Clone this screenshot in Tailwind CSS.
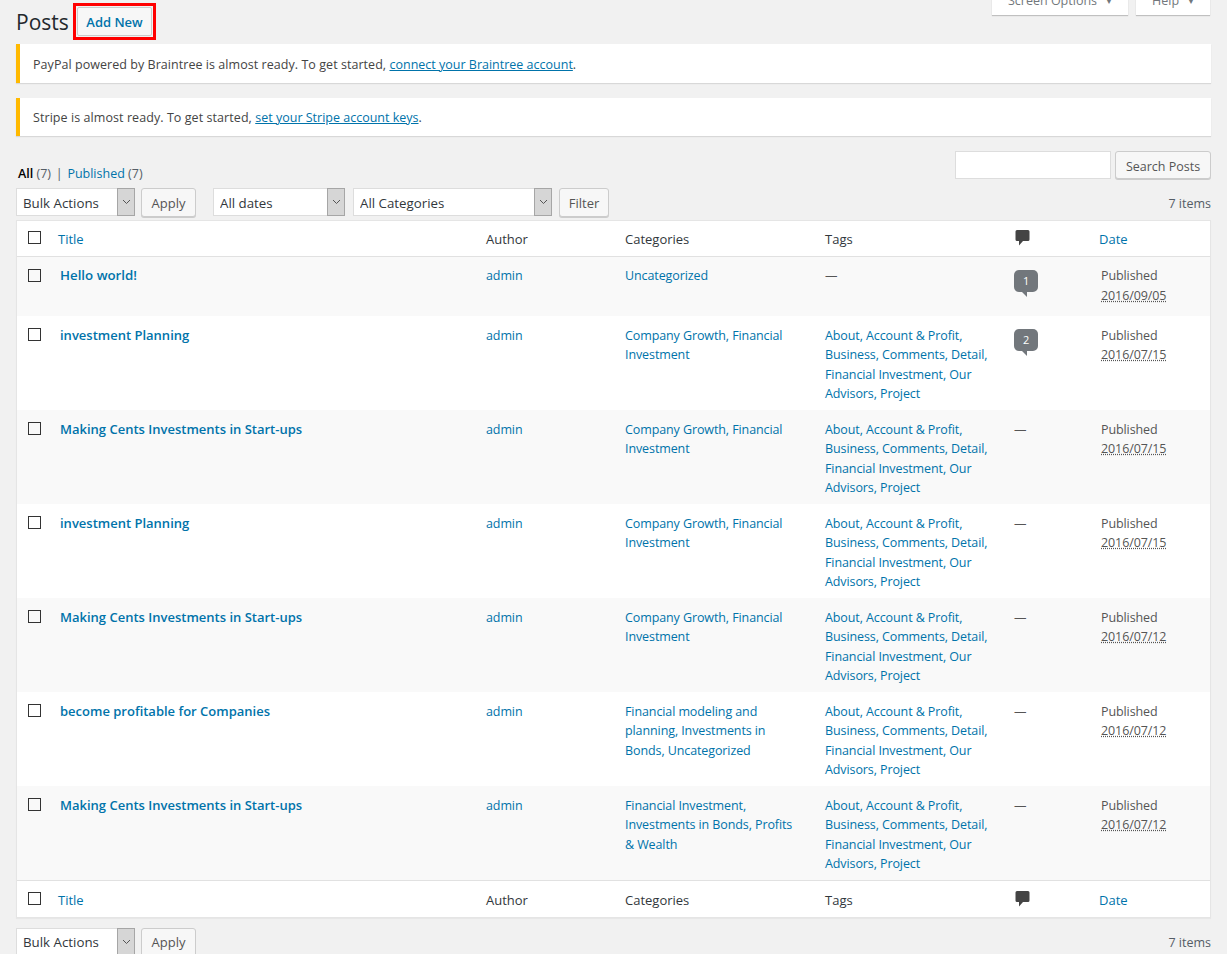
<!DOCTYPE html>
<html lang="en">
<head>
    <meta charset="UTF-8">
    <meta name="viewport" content="width=device-width, initial-scale=1.0">
    <title>Posts</title>
    <script src="https://cdn.jsdelivr.net/npm/@tailwindcss/browser@4"></script>
</head>
<body class="bg-[#f1f1f1] font-['Open_Sans',sans-serif] text-[12.5px] leading-[19.5px] text-[#444]">
<div class="h-[954px] overflow-hidden pl-[16px] pr-[16px]">

    <!-- Heading + screen meta tabs -->
    <div class="flex justify-between items-start h-[44px]">
        <div class="flex items-start">
            <h1 class="w-[52px] text-[21px] leading-[29px] text-[#23282d] mt-[8px]">Posts</h1>
            <div class="ml-[5px] mt-[3px] border-[3px] border-[#ff0000] p-[1px]">
                <a href="#" class="block w-[75px] h-[29px] leading-[28px] text-[13px] text-center border border-[#ccc] bg-[#f7f7f7] rounded-[2px] text-[#0073aa] font-semibold">Add New</a>
            </div>
        </div>
        <div class="flex gap-[8px] -mt-[13px] mr-[1px] items-start">
            <button class="w-[136px] h-[28px] bg-white shadow-[0_1px_1px_rgba(0,0,0,0.2)] text-[#72777c] flex items-center pl-[16px] gap-[8px]">Screen Options <span class="text-[8px]">▼</span></button>
            <button class="w-[74px] h-[28px] bg-white shadow-[0_1px_1px_rgba(0,0,0,0.2)] text-[#72777c] flex items-center pl-[16px] gap-[8px]">Help <span class="text-[8px]">▼</span></button>
        </div>
    </div>

    <!-- Notices -->
    <div class="h-[39px] bg-white border-l-[4px] border-[#ffb900] shadow-[0_1px_1px_rgba(0,0,0,0.1)] pl-[13px] pt-[11px] text-[#444] tracking-[0.05px]">
        PayPal powered by Braintree is almost ready. To get started, <a href="#" class="text-[#0073aa] underline tracking-normal">connect your Braintree account</a>.
    </div>
    <div class="h-[38px] mt-[15px] bg-white border-l-[4px] border-[#ffb900] shadow-[0_1px_1px_rgba(0,0,0,0.1)] pl-[13px] pt-[10px] text-[#444] tracking-[0.07px]">
        Stripe is almost ready. To get started, <a href="#" class="text-[#0073aa] underline tracking-normal">set your Stripe account keys</a>.
    </div>

    <!-- Views + search -->
    <div class="flex justify-between mt-[15px] h-[37px]">
        <div class="pl-[2px] pt-[13px] text-[#555d66]"><span class="font-semibold text-black">All</span> (7) <span class="mx-[1.500px]">|</span> <a href="#" class="text-[#0073aa]">Published</a> (7)</div>
        <div class="flex gap-[4px]">
            <input type="text" class="w-[156px] h-[28px] bg-white border border-[#ddd]">
            <button class="w-[96px] h-[28px] pt-[4px] bg-[#f7f7f7] border border-[#ccc] rounded-[3px] shadow-[0_1px_0_#ccc] text-[#555]">Search Posts</button>
        </div>
    </div>

    <!-- Top filters -->
    <div class="flex items-start h-[32px]">
        <div class="relative w-[119px] h-[28px]">
            <select class="appearance-none w-full h-full bg-white border border-[#ddd] pl-[6px] pt-[4px] text-[13.3px] text-[#32373c]"><option>Bulk Actions</option></select>
            <span class="absolute right-0 top-0 w-[18px] h-[28px] bg-[#d6d6d6] border border-[#a6a6a6] flex items-center justify-center"><svg width="9" height="6" viewBox="0 0 9 6" fill="none" stroke="#555" stroke-width="1"><path d="M1 1l3.5 3.5L8 1"/></svg></span>
        </div>
        <button class="ml-[6px] w-[55px] h-[29px] pt-[3px] text-[13px] bg-[#f7f7f7] border border-[#ccc] rounded-[3px] shadow-[0_1px_0_#ccc] text-[#555]">Apply</button>
        <div class="relative ml-[17px] w-[132px] h-[28px]">
            <select class="appearance-none w-full h-full bg-white border border-[#ddd] pl-[6px] pt-[4px] text-[13.3px] text-[#32373c]"><option>All dates</option></select>
            <span class="absolute right-0 top-0 w-[18px] h-[28px] bg-[#d6d6d6] border border-[#a6a6a6] flex items-center justify-center"><svg width="9" height="6" viewBox="0 0 9 6" fill="none" stroke="#555" stroke-width="1"><path d="M1 1l3.5 3.5L8 1"/></svg></span>
        </div>
        <div class="relative ml-[8px] w-[199px] h-[28px]">
            <select class="appearance-none w-full h-full bg-white border border-[#ddd] pl-[6px] pt-[4px] text-[13.3px] text-[#32373c]"><option>All Categories</option></select>
            <span class="absolute right-0 top-0 w-[18px] h-[28px] bg-[#d6d6d6] border border-[#a6a6a6] flex items-center justify-center"><svg width="9" height="6" viewBox="0 0 9 6" fill="none" stroke="#555" stroke-width="1"><path d="M1 1l3.5 3.5L8 1"/></svg></span>
        </div>
        <button class="ml-[7px] w-[50px] h-[29px] pt-[3px] text-[13px] bg-[#f7f7f7] border border-[#ccc] rounded-[3px] shadow-[0_1px_0_#ccc] text-[#555]">Filter</button>
        <div class="ml-auto pt-[6px] text-[#555d66]">7 items</div>
    </div>

    <!-- Posts table -->
    <div class="bg-white border border-[#e5e5e5] shadow-[0_1px_1px_rgba(0,0,0,0.04)] text-[#555] tracking-[-0.1px]">
        <div class="grid grid-cols-[43px_426px_139px_200px_189px_85px_1fr] h-[36px] border-b border-[#e1e1e1] pt-[9px] text-[13px] tracking-normal text-[#32373c]">
            <div><input type="checkbox" class="block appearance-none w-[13px] h-[13px] border border-[#333] ml-[11px] mt-[1px]"></div>
            <div><a href="#" class="-ml-[2px] text-[#0073aa]">Title</a></div>
            <div>Author</div>
            <div>Categories</div>
            <div>Tags</div>
            <div><svg class="ml-[1px]" width="15" height="16" viewBox="0 0 15 16" fill="#444"><path d="M2 0h11a1.5 1.5 0 0 1 1.5 1.500v8A1.500 1.500 0 0 1 13 11H8l-4 4.500V11H2A1.500 1.500 0 0 1 .5 9.500v-8A1.500 1.500 0 0 1 2 0z"/></svg></div>
            <div class="pl-[2px]"><a href="#" class="-ml-[2px] text-[#0073aa]">Date</a></div>
        </div>

        <div class="grid grid-cols-[43px_426px_139px_200px_189px_87px_1fr] h-[59px] bg-[#f9f9f9] pt-[9px]">
            <div><input type="checkbox" class="block appearance-none w-[13px] h-[13px] border border-[#333] ml-[11px] mt-[3px]"></div>
            <div><a href="#" class="text-[13.3px] tracking-normal font-semibold text-[#0073aa]">Hello world!</a></div>
            <div><a href="#" class="text-[#0073aa]">admin</a></div>
            <div class="w-[172px]"><a href="#" class="text-[#0073aa]">Uncategorized</a></div>
            <div>—</div>
            <div class="relative">
                <span class="relative block w-[24px] h-[22px] mt-[4px] bg-[#72777c] rounded-[5px] text-white text-[11px] leading-[22px] text-center">1<span class="absolute left-[8px] top-[22px] border-l-[5px] border-t-[5px] border-l-transparent border-t-[#72777c]"></span></span>
            </div>
            <div>Published<br><abbr class="underline decoration-dotted">2016/09/05</abbr></div>
        </div>

        <div class="grid grid-cols-[43px_426px_139px_200px_189px_87px_1fr] h-[94px] pt-[9.5px]">
            <div><input type="checkbox" class="block appearance-none w-[13px] h-[13px] border border-[#333] ml-[11px] mt-[2.5px]"></div>
            <div><a href="#" class="text-[13px] tracking-normal font-semibold text-[#0073aa]">investment Planning</a></div>
            <div><a href="#" class="text-[#0073aa]">admin</a></div>
            <div class="w-[172px] text-[#0073aa]"><a href="#">Company Growth</a>, <a href="#">Financial Investment</a></div>
            <div class="w-[172px] text-[#0073aa]"><a href="#">About</a>, <a href="#">Account &amp; Profit</a>, <a href="#">Business</a>, <a href="#">Comments</a>, <a href="#">Detail</a>, <a href="#">Financial Investment</a>, <a href="#">Our Advisors</a>, <a href="#">Project</a></div>
            <div class="relative">
                <span class="relative block w-[24px] h-[22px] mt-[3.5px] bg-[#72777c] rounded-[5px] text-white text-[11px] leading-[22px] text-center">2<span class="absolute left-[8px] top-[22px] border-l-[5px] border-t-[5px] border-l-transparent border-t-[#72777c]"></span></span>
            </div>
            <div>Published<br><abbr class="underline decoration-dotted">2016/07/15</abbr></div>
        </div>

        <div class="grid grid-cols-[43px_426px_139px_200px_189px_87px_1fr] h-[94px] bg-[#f9f9f9] pt-[9.5px]">
            <div><input type="checkbox" class="block appearance-none w-[13px] h-[13px] border border-[#333] ml-[11px] mt-[2.5px]"></div>
            <div><a href="#" class="text-[13px] tracking-normal font-semibold text-[#0073aa]">Making Cents Investments in Start-ups</a></div>
            <div><a href="#" class="text-[#0073aa]">admin</a></div>
            <div class="w-[172px] text-[#0073aa]"><a href="#">Company Growth</a>, <a href="#">Financial Investment</a></div>
            <div class="w-[172px] text-[#0073aa]"><a href="#">About</a>, <a href="#">Account &amp; Profit</a>, <a href="#">Business</a>, <a href="#">Comments</a>, <a href="#">Detail</a>, <a href="#">Financial Investment</a>, <a href="#">Our Advisors</a>, <a href="#">Project</a></div>
            <div>—</div>
            <div>Published<br><abbr class="underline decoration-dotted">2016/07/15</abbr></div>
        </div>

        <div class="grid grid-cols-[43px_426px_139px_200px_189px_87px_1fr] h-[94px] pt-[9.5px]">
            <div><input type="checkbox" class="block appearance-none w-[13px] h-[13px] border border-[#333] ml-[11px] mt-[2.5px]"></div>
            <div><a href="#" class="text-[13px] tracking-normal font-semibold text-[#0073aa]">investment Planning</a></div>
            <div><a href="#" class="text-[#0073aa]">admin</a></div>
            <div class="w-[172px] text-[#0073aa]"><a href="#">Company Growth</a>, <a href="#">Financial Investment</a></div>
            <div class="w-[172px] text-[#0073aa]"><a href="#">About</a>, <a href="#">Account &amp; Profit</a>, <a href="#">Business</a>, <a href="#">Comments</a>, <a href="#">Detail</a>, <a href="#">Financial Investment</a>, <a href="#">Our Advisors</a>, <a href="#">Project</a></div>
            <div>—</div>
            <div>Published<br><abbr class="underline decoration-dotted">2016/07/15</abbr></div>
        </div>

        <div class="grid grid-cols-[43px_426px_139px_200px_189px_87px_1fr] h-[94px] bg-[#f9f9f9] pt-[9.5px]">
            <div><input type="checkbox" class="block appearance-none w-[13px] h-[13px] border border-[#333] ml-[11px] mt-[2.5px]"></div>
            <div><a href="#" class="text-[13px] tracking-normal font-semibold text-[#0073aa]">Making Cents Investments in Start-ups</a></div>
            <div><a href="#" class="text-[#0073aa]">admin</a></div>
            <div class="w-[172px] text-[#0073aa]"><a href="#">Company Growth</a>, <a href="#">Financial Investment</a></div>
            <div class="w-[172px] text-[#0073aa]"><a href="#">About</a>, <a href="#">Account &amp; Profit</a>, <a href="#">Business</a>, <a href="#">Comments</a>, <a href="#">Detail</a>, <a href="#">Financial Investment</a>, <a href="#">Our Advisors</a>, <a href="#">Project</a></div>
            <div>—</div>
            <div>Published<br><abbr class="underline decoration-dotted">2016/07/12</abbr></div>
        </div>

        <div class="grid grid-cols-[43px_426px_139px_200px_189px_87px_1fr] h-[94px] pt-[9.5px]">
            <div><input type="checkbox" class="block appearance-none w-[13px] h-[13px] border border-[#333] ml-[11px] mt-[2.5px]"></div>
            <div><a href="#" class="text-[13px] tracking-normal font-semibold text-[#0073aa]">become profitable for Companies</a></div>
            <div><a href="#" class="text-[#0073aa]">admin</a></div>
            <div class="w-[172px] text-[#0073aa]"><a href="#">Financial modeling and planning</a>, <a href="#">Investments in Bonds</a>, <a href="#">Uncategorized</a></div>
            <div class="w-[172px] text-[#0073aa]"><a href="#">About</a>, <a href="#">Account &amp; Profit</a>, <a href="#">Business</a>, <a href="#">Comments</a>, <a href="#">Detail</a>, <a href="#">Financial Investment</a>, <a href="#">Our Advisors</a>, <a href="#">Project</a></div>
            <div>—</div>
            <div>Published<br><abbr class="underline decoration-dotted">2016/07/12</abbr></div>
        </div>

        <div class="grid grid-cols-[43px_426px_139px_200px_189px_87px_1fr] h-[94px] bg-[#f9f9f9] pt-[9.5px]">
            <div><input type="checkbox" class="block appearance-none w-[13px] h-[13px] border border-[#333] ml-[11px] mt-[2.5px]"></div>
            <div><a href="#" class="text-[13px] tracking-normal font-semibold text-[#0073aa]">Making Cents Investments in Start-ups</a></div>
            <div><a href="#" class="text-[#0073aa]">admin</a></div>
            <div class="w-[172px] text-[#0073aa]"><a href="#">Financial Investment</a>, <a href="#">Investments in Bonds</a>, <a href="#">Profits &amp; Wealth</a></div>
            <div class="w-[172px] text-[#0073aa]"><a href="#">About</a>, <a href="#">Account &amp; Profit</a>, <a href="#">Business</a>, <a href="#">Comments</a>, <a href="#">Detail</a>, <a href="#">Financial Investment</a>, <a href="#">Our Advisors</a>, <a href="#">Project</a></div>
            <div>—</div>
            <div>Published<br><abbr class="underline decoration-dotted">2016/07/12</abbr></div>
        </div>

        <div class="grid grid-cols-[43px_426px_139px_200px_189px_85px_1fr] h-[37px] border-t border-[#e1e1e1] pt-[10px] text-[13px] tracking-normal text-[#32373c]">
            <div><input type="checkbox" class="block appearance-none w-[13px] h-[13px] border border-[#333] ml-[11px] mt-[1px]"></div>
            <div><a href="#" class="-ml-[2px] text-[#0073aa]">Title</a></div>
            <div>Author</div>
            <div>Categories</div>
            <div>Tags</div>
            <div><svg class="ml-[1px]" width="15" height="16" viewBox="0 0 15 16" fill="#444"><path d="M2 0h11a1.5 1.5 0 0 1 1.5 1.500v8A1.500 1.500 0 0 1 13 11H8l-4 4.500V11H2A1.500 1.500 0 0 1 .5 9.500v-8A1.500 1.500 0 0 1 2 0z"/></svg></div>
            <div class="pl-[2px]"><a href="#" class="-ml-[2px] text-[#0073aa]">Date</a></div>
        </div>
    </div>

    <!-- Bottom actions -->
    <div class="flex items-start mt-[10px]">
        <div class="relative w-[119px] h-[28px]">
            <select class="appearance-none w-full h-full bg-white border border-[#ddd] pl-[6px] pt-[2px] text-[13.3px] text-[#32373c]"><option>Bulk Actions</option></select>
            <span class="absolute right-0 top-0 w-[18px] h-[28px] bg-[#d6d6d6] border border-[#a6a6a6] flex items-center justify-center"><svg width="9" height="6" viewBox="0 0 9 6" fill="none" stroke="#555" stroke-width="1"><path d="M1 1l3.5 3.5L8 1"/></svg></span>
        </div>
        <button class="ml-[6px] w-[55px] h-[29px] pt-[1px] text-[13px] bg-[#f7f7f7] border border-[#ccc] rounded-[3px] shadow-[0_1px_0_#ccc] text-[#555]">Apply</button>
        <div class="ml-auto pt-[5px] text-[#555d66]">7 items</div>
    </div>
</div>
</body>
</html>
